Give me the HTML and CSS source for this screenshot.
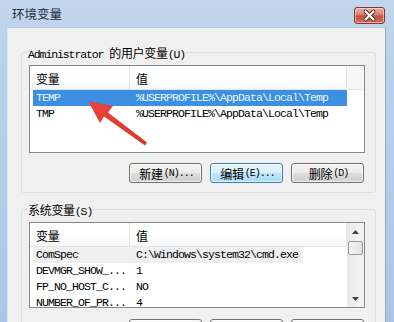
FILE: index.html
```html
<!DOCTYPE html>
<html>
<head>
<meta charset="utf-8">
<link rel="stylesheet" href="styles.css">
</head>
<body>
<div class="window">
  <div class="titlebar">
    <span class="title">环境变量</span>
    <div class="close">
      <svg width="29" height="15" viewBox="0 0 29 15">
        <path d="M10.5 3.5 L18.5 11.5 M18.5 3.5 L10.5 11.5" stroke="#5a2a24" stroke-width="4" stroke-linecap="round"/>
        <path d="M10.5 3.5 L18.5 11.5 M18.5 3.5 L10.5 11.5" stroke="#ffffff" stroke-width="2.2" stroke-linecap="round"/>
      </svg>
    </div>
  </div>
  <div class="client">
    <div class="group">
      <div class="legend"><span class="lat">Administrator </span><span class="zh">的用户变量</span><span class="lat">(U)</span></div>
      <div class="list l1">
        <div class="lhead">
          <div class="hc c1"><span class="zh">变量</span></div>
          <div class="hc c2"><span class="zh">值</span></div>
          <div class="hc rest"></div>
        </div>
        <div class="row sel"><div class="c1">TEMP</div><div class="c2">%USERPROFILE%\AppData\Local\Temp</div></div>
        <div class="row"><div class="c1">TMP</div><div class="c2">%USERPROFILE%\AppData\Local\Temp</div></div>
      </div>
      <div class="btns">
        <button class="btn"><span class="zh">新建</span><span class="bl">(N)...</span></button>
        <button class="btn hot"><span class="zh">编辑</span><span class="bl">(E)...</span></button>
        <button class="btn"><span class="zh">删除</span><span class="bl">(D)</span></button>
      </div>
    </div>
    <div class="group g2">
      <div class="legend"><span class="zh">系统变量</span><span class="lat">(S)</span></div>
      <div class="list l2">
        <div class="lmain">
          <div class="lhead">
            <div class="hc c1"><span class="zh">变量</span></div>
            <div class="hc c2"><span class="zh">值</span></div>
          </div>
          <div class="row dim"><div class="c1">ComSpec</div><div class="c2">C:\Windows\system32\cmd.exe</div></div>
          <div class="row"><div class="c1">DEVMGR_SHOW_...</div><div class="c2">1</div></div>
          <div class="row"><div class="c1">FP_NO_HOST_C...</div><div class="c2">NO</div></div>
          <div class="row"><div class="c1">NUMBER_OF_PR...</div><div class="c2">4</div></div>
        </div>
        <div class="sb">
          <div class="sb-btn"><svg width="7" height="4" viewBox="0 0 7 4"><path d="M0 4 L3.5 0 L7 4 Z" fill="#404040"/></svg></div>
          <div class="thumb"></div>
          <div class="sb-track"></div>
          <div class="sb-btn"><svg width="7" height="4" viewBox="0 0 7 4"><path d="M0 0 L3.5 4 L7 0 Z" fill="#404040"/></svg></div>
        </div>
      </div>
      <div class="btns">
        <button class="btn" aria-label="新建"></button>
        <button class="btn" aria-label="编辑"></button>
        <button class="btn" aria-label="删除"></button>
      </div>
    </div>
  </div>
  <svg class="arrow" width="394" height="322" viewBox="0 0 394 322">
    <defs>
      <linearGradient id="ag" x1="0" y1="0" x2="1" y2="1">
        <stop offset="0" stop-color="#e8463c"/>
        <stop offset="1" stop-color="#d9352c"/>
      </linearGradient>
    </defs>
    <polygon points="88,101 113,106 108,112.5 147,142.5 145,145.5 104,116.5 100,123" fill="url(#ag)"/>
  </svg>
</div>
</body>
</html>
```
FILE: styles.css
```css
body {
  margin: 0;
}

.window {
  position: relative;
  width: 394px;
  height: 322px;
  box-sizing: border-box;
  padding: 0 8px 0 7px;
  display: flex;
  flex-direction: column;
  overflow: hidden;
  background: linear-gradient(#c3d7ee, #bdd3ec 27px, #a9c6e8);
  font-family: "Liberation Mono", "Noto Sans CJK SC", monospace;
  font-size: 11.5px;
  letter-spacing: -0.9px;
  color: #000;
}

.titlebar {
  height: 27px;
  flex: none;
  display: flex;
  justify-content: space-between;
  align-items: flex-start;
}

.title {
  font-family: "Noto Sans CJK SC", sans-serif;
  font-size: 12.5px;
  letter-spacing: 0;
  line-height: 16px;
  margin: 6px 0 0 5px;
  color: #1e2a38;
}

.close {
  width: 31px;
  height: 17px;
  margin: 7px 1px 0 0;
  box-sizing: border-box;
  border: 1px solid #7a3a32;
  border-radius: 3px;
  background: linear-gradient(#eab0a4, #d98a7a 40%, #c7503e 55%, #d36f5c);
  box-shadow: inset 0 0 0 1px rgba(255, 220, 210, 0.6);
  display: flex;
  align-items: center;
  justify-content: center;
}

.client {
  flex: 1;
  min-height: 0;
  background: #f0f0f0;
  border-left: 1px solid #dce6f1;
  border-right: 1px solid #9ea9b6;
  border-top: 1px solid #b9c9db;
  display: flex;
  flex-direction: column;
  overflow: hidden;
}

.group {
  flex: none;
  margin: 24px 9px 0 13px;
  border: 1px solid #d5dfe5;
  border-radius: 3px;
  padding: 0 10px 9px 7px;
  display: flex;
  flex-direction: column;
}

.g2 {
  margin-top: 16px;
}

.legend {
  align-self: flex-start;
  margin: -7px 0 0 -2px;
  padding: 0 1px;
  height: 13px;
  line-height: 13px;
  background: #f0f0f0;
  white-space: nowrap;
  letter-spacing: -1.1px;
}

.zh {
  font-family: "Noto Sans CJK SC", sans-serif;
  font-size: 12px;
  letter-spacing: -0.3px;
}

.list {
  margin-top: 6px;
  height: 88px;
  box-sizing: border-box;
  border: 1px solid #828790;
  background: #fff;
  flex: none;
  overflow: hidden;
}

.l2 {
  height: 86px;
  display: flex;
}

.lmain {
  flex: 1;
  min-width: 0;
}

.lhead {
  display: flex;
  height: 24px;
  box-sizing: border-box;
  border-bottom: 1px solid #e5e5e5;
  background: linear-gradient(#ffffff, #ffffff 50%, #f6f7f9);
}

.hc {
  box-sizing: border-box;
  border-right: 1px solid #e3e3e3;
  padding: 3px 0 0 6px;
  line-height: 20px;
}

.hc.c1 {
  width: 100px;
}

.hc.c2 {
  width: 217px;
}

.hc.rest {
  flex: 1;
  border-right: 0;
  background: #f7f7f7;
}

.row {
  display: flex;
  height: 16px;
  line-height: 16px;
  margin-left: 3px;
  width: 314px;
  white-space: nowrap;
}

.row .c1 {
  width: 97px;
  padding-left: 3px;
  box-sizing: border-box;
  overflow: hidden;
}

.row .c2 {
  flex: 1;
  padding-left: 6px;
  overflow: hidden;
}

.row.sel {
  background: #3d8fe3;
  color: #e4f6ff;
}

.row.dim {
  background: linear-gradient(to right, #efefef 270px, #ffffff 270px);
}

.sb {
  width: 17px;
  flex: none;
  display: flex;
  flex-direction: column;
  background: linear-gradient(to right, #e9e9e9, #f5f5f5);
}

.sb-btn {
  height: 17px;
  flex: none;
  display: flex;
  align-items: center;
  justify-content: center;
}

.thumb {
  height: 14px;
  flex: none;
  margin: 1px 1px 0;
  box-sizing: border-box;
  border: 1px solid #979797;
  border-radius: 2px;
  background: linear-gradient(to right, #f6f6f6, #e2e2e2);
}

.sb-track {
  flex: 1;
}

.btns {
  display: flex;
  justify-content: flex-end;
  gap: 8px;
  margin-top: 10px;
  padding-right: 1px;
}

.g2 .btns {
  margin-top: 11px;
}

.btn {
  width: 73px;
  height: 20px;
  box-sizing: border-box;
  border: 1px solid #707070;
  border-radius: 3px;
  padding: 0 0 0 2px;
  background: linear-gradient(#f3f3f3, #ebebeb 49%, #dddddd 51%, #d0d0d0);
  box-shadow: inset 0 0 0 1px rgba(255, 255, 255, 0.7);
  display: flex;
  align-items: center;
  justify-content: center;
  color: #000;
  font-family: "Liberation Mono", monospace;
}

.btn.hot {
  border-color: #3c7fb1;
  background: linear-gradient(#eaf6fd, #d9f0fc 49%, #bee6fd 51%, #a7d9f5);
}

.bl {
  font-size: 10px;
  letter-spacing: -1px;
  margin-left: 1px;
}

.arrow {
  position: absolute;
  left: 0;
  top: 0;
  pointer-events: none;
}
```
